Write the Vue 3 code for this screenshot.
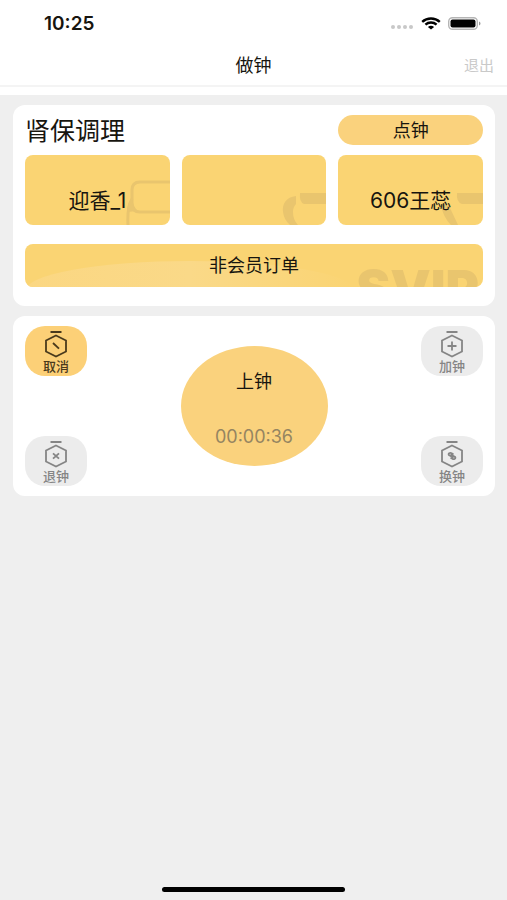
<script setup>
import { ref } from 'vue'

const tiles = ref([
  { label: '迎香_1', art: 'bed' },
  { label: '', art: 'clock' },
  { label: '606王蕊', art: 'person' }
])

const actions = [
  { label: '取消', area: 'tl', active: true, mark: 'M13 16l6 5.6' },
  { label: '加钟', area: 'tr', active: false, mark: 'M16 14.5v9M11.5 19h9' },
  { label: '退钟', area: 'bl', active: false, mark: 'M13 16.3l6 5.4M19 16.3l-6 5.4' },
  {
    label: '换钟',
    area: 'br',
    active: false,
    mark: 'M17.5 20.5l-4.3-2.3q-1.2-1 0-2 1.2-.8 2.4 0l1.9 1.3M14.5 17.5l4.3 2.3q1.2 1 0 2-1.2.8-2.4 0l-1.9-1.3'
  }
]
</script>

<template>
  <div class="page">
    <header class="top">
      <div class="status">
        <span class="time">10:25</span>
        <div class="signals">
          <svg class="dots" viewBox="0 0 24 6" aria-hidden="true">
            <circle cx="3" cy="3" r="2" /><circle cx="9" cy="3" r="2" />
            <circle cx="15" cy="3" r="2" /><circle cx="21" cy="3" r="2" />
          </svg>
          <svg class="wifi" viewBox="0 0 20 13" aria-hidden="true">
            <path d="M1.2 4.8C6.2.3 13.8.3 18.8 4.8" />
            <path d="M4.4 7.7c3.2-2.9 8-2.9 11.2 0" />
            <path class="solid" d="M10 12.5 6.9 9.9c1.7-1.5 4.5-1.5 6.2 0z" />
          </svg>
          <svg class="battery" viewBox="0 0 33 13" aria-hidden="true">
            <rect class="shell" x="0.7" y="0.7" width="28.6" height="11.6" rx="3.8" />
            <rect x="2.5" y="2.5" width="25" height="8" rx="2" />
            <path class="cap" d="M31 4.5c2 .8 2 3.2 0 4z" />
          </svg>
        </div>
      </div>
      <nav class="nav">
        <h1>做钟</h1>
        <a class="exit" href="#">退出</a>
      </nav>
    </header>

    <main class="content">
      <section class="card order">
        <div class="heading">
          <h2>肾保调理</h2>
          <button class="pill" type="button">点钟</button>
        </div>
        <div class="tiles">
          <button v-for="t in tiles" :key="t.art" class="tile" type="button" :aria-label="t.label || '钟'">
            <svg class="art" viewBox="0 0 48 48" aria-hidden="true">
              <g v-if="t.art === 'bed'" class="outline">
                <path d="M48 5H18q-8 0-8 8v14q0 8 8 8h30" />
                <path d="M10 22q-5 8-4 26" />
                <path class="fill" d="M10 20q-5 6-5 15l11-1q-5-4-6-14z" />
              </g>
              <g v-else-if="t.art === 'clock'">
                <path class="fill" d="M18 19C8 20 4 27 5 35q1 8 7 13h8q-5-5-5-13 0-5 3-8z" />
                <path class="fill" d="M22 16h26v11H26q-5-2-4-11z" />
              </g>
              <g v-else>
                <path class="fill" d="M6 28q7-1 10 5l7 15h-7q-8-8-10-20z" />
                <path class="fill" d="M22 16h26v11H27q-6-2-5-11z" />
              </g>
            </svg>
            <span>{{ t.label }}</span>
          </button>
        </div>
        <button class="member" type="button">
          <span class="glow"></span>
          <span class="svip" aria-hidden="true">SVIP</span>
          <span class="member-label">非会员订单</span>
        </button>
      </section>

      <section class="card clock">
        <button
          v-for="a in actions"
          :key="a.area"
          type="button"
          :class="['action', a.area, { active: a.active }]"
        >
          <svg viewBox="0 0 32 32" aria-hidden="true">
            <path d="M10.5 6h11M16 9.5l10 5v11l-10 5-10-5v-11z" />
            <path class="mark" :d="a.mark" />
          </svg>
          <span>{{ a.label }}</span>
        </button>
        <button class="start" type="button">
          <span>上钟</span>
          <time>00:00:36</time>
        </button>
      </section>
    </main>

    <div class="home"></div>
  </div>
</template>

<style>
body {
  background: #efefef;
}
</style>

<style scoped>
.page {
  min-height: 100vh;
  display: flex;
  flex-direction: column;
  background: #efefef;
  color: #17150f;
  font-family: Inter, "Noto Sans CJK SC", sans-serif;
}
button {
  border: 0;
  margin: 0;
  padding: 0;
  color: inherit;
  font: inherit;
  cursor: pointer;
}
h1,
h2 {
  margin: 0;
  font-weight: 400;
}
.top {
  background: #fff;
  padding-bottom: 8px;
}
.status {
  height: 46px;
  display: flex;
  align-items: center;
  justify-content: space-between;
  padding: 0 26px 0 44px;
}
.time {
  font-size: 19px;
  font-weight: 600;
}
.signals {
  display: flex;
  align-items: center;
  gap: 7px;
}
.dots {
  width: 24px;
  height: 6px;
  margin-top: 8px;
  fill: #c8c8c8;
}
.wifi {
  width: 20px;
  height: 13px;
  fill: none;
  stroke: #000;
  stroke-width: 2.4;
}
.wifi .solid {
  fill: #000;
  stroke: none;
}
.battery {
  width: 33px;
  height: 13px;
}
.battery .shell {
  fill: none;
  stroke: #b5b5b5;
  stroke-width: 1.4;
}
.battery .cap {
  fill: #999;
}
.nav {
  height: 39px;
  display: grid;
  grid-template-columns: 1fr auto 1fr;
  align-items: center;
  padding: 0 13px;
  border-bottom: 2px solid #f4f4f4;
}
.nav h1 {
  grid-column: 2;
  font-size: 18px;
  line-height: 24px;
}
.exit {
  justify-self: end;
  font-size: 15px;
  line-height: 24px;
  color: #c9c9c9;
  text-decoration: none;
}
.content {
  flex: 1;
  display: flex;
  flex-direction: column;
  gap: 10px;
  padding: 10px 12px 10px 13px;
}
.card {
  background: #fff;
  border-radius: 12px;
  padding: 10px 12px;
}
.order {
  padding-bottom: 19px;
}
.heading,
.tiles {
  display: grid;
  grid-template-columns: repeat(3, 1fr);
  column-gap: 12px;
}
.heading {
  height: 30px;
}
.heading h2 {
  grid-column: span 2;
  font-size: 25px;
  line-height: 32px;
}
.pill {
  height: 30px;
  border-radius: 15px;
  background: #fad27d;
  font-size: 18px;
  line-height: 32px;
}
.tiles {
  margin-top: 10px;
}
.tile {
  position: relative;
  height: 70px;
  border-radius: 8px;
  background: #fad473;
  overflow: hidden;
  padding-top: 22px;
  font-size: 21px;
  line-height: 32px;
}
.tile span {
  position: relative;
}
.art {
  position: absolute;
  right: 0;
  bottom: 0;
  width: 48px;
  height: 48px;
  color: #e9c56e;
}
.art .fill {
  fill: currentColor;
  stroke: none;
}
.art .outline {
  fill: none;
  stroke: currentColor;
  stroke-width: 3;
}
.member {
  position: relative;
  display: block;
  width: 100%;
  height: 43px;
  margin-top: 19px;
  border-radius: 8px;
  background: #fad473;
  overflow: hidden;
  font-size: 18px;
  line-height: 44px;
}
.glow {
  position: absolute;
  left: 0;
  top: 17px;
  width: 72%;
  height: 60px;
  border-radius: 50%;
  background: linear-gradient(90deg, #fbd782, #fad988 50%, #fad473);
}
.svip {
  position: absolute;
  right: 4px;
  top: 20px;
  font-size: 51px;
  line-height: 50px;
  font-weight: 900;
  color: #e9c56e;
}
.member-label {
  position: relative;
}
.clock {
  display: grid;
  grid-template-columns: 62px 1fr 62px;
  grid-template-rows: 50px 50px;
  row-gap: 60px;
  grid-template-areas: "tl start tr" "bl start br";
}
.action {
  display: flex;
  flex-direction: column;
  align-items: center;
  border-radius: 20px;
  background: #ececec;
  color: #858585;
  font-size: 13px;
  line-height: 16px;
  font-weight: 500;
}
.action svg {
  width: 32px;
  height: 32px;
  flex: none;
  fill: none;
  stroke: currentColor;
  stroke-width: 1.8;
}
.action .mark {
  transform: translateY(1px);
}
.active {
  background: #fcd077;
  color: #4a3a1c;
}
.tl {
  grid-area: tl;
}
.tr {
  grid-area: tr;
}
.bl {
  grid-area: bl;
}
.br {
  grid-area: br;
}
.start {
  grid-area: start;
  place-self: center;
  width: 147px;
  height: 120px;
  border-radius: 50%;
  background: #fad27d;
  display: flex;
  flex-direction: column;
  align-items: center;
  justify-content: flex-end;
  gap: 31px;
  padding-bottom: 17px;
  font-size: 18px;
  line-height: 24px;
}
.start time {
  color: #958561;
}
.home {
  width: 36%;
  height: 5px;
  margin: 0 auto 8px;
  border-radius: 3px;
  background: #000;
}
</style>
